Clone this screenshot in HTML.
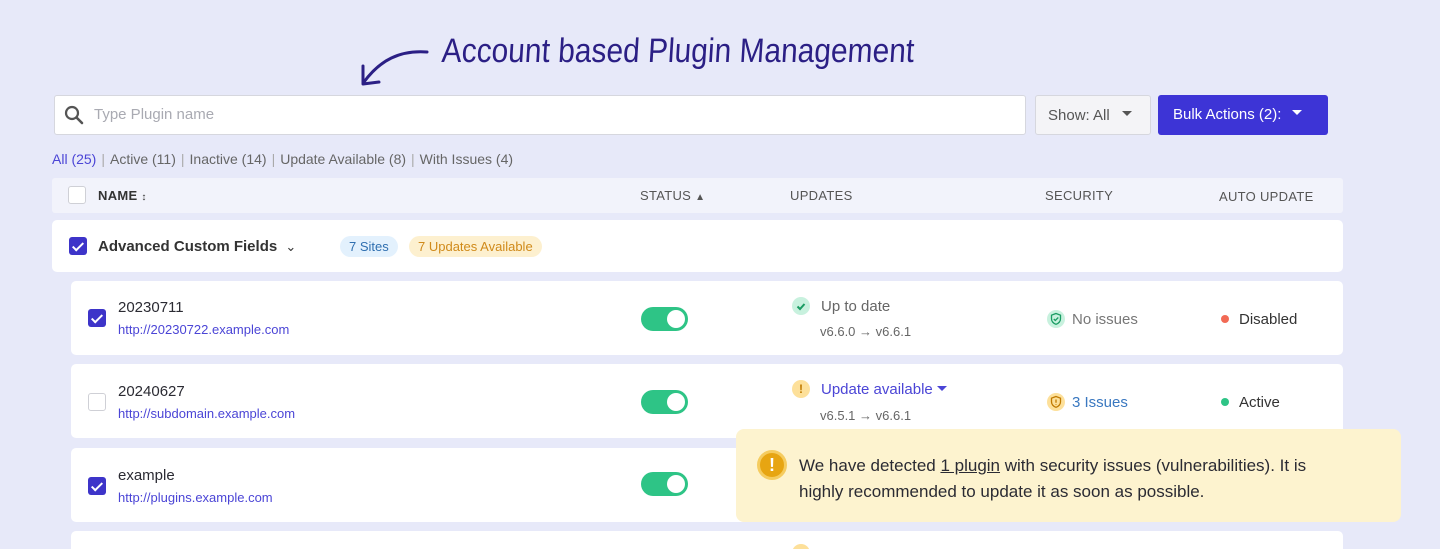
<!DOCTYPE html>
<html><head><style>
*{box-sizing:border-box;margin:0;padding:0}
html,body{width:1440px;height:549px;overflow:hidden}
body{background:#e7e9f9;font-family:"Liberation Sans",sans-serif;position:relative;color:#2b2b33}
.a{position:absolute}
.card{position:absolute;background:#fff;border-radius:5px}
.cb{position:absolute;width:18px;height:18px;border-radius:3px;background:#3d34c9;}
.cb::after{content:"";position:absolute;left:6px;top:2.5px;width:4px;height:9px;border:solid #fff;border-width:0 2px 2px 0;transform:rotate(45deg)}
.cbe{position:absolute;width:18px;height:18px;border-radius:3px;border:1px solid #cfd0d6;background:#fff}
.tg{position:absolute;width:47px;height:24px;border-radius:12px;background:#2ec486}
.tg::after{content:"";position:absolute;right:3px;top:3px;width:18px;height:18px;border-radius:50%;background:#fff}
.nm{font-size:15px;color:#2b2b33}
.url{font-size:13px;color:#4b45d6}
.sm{font-size:13px;color:#666}
.sep{color:#aaa;margin:0 5px}
</style></head><body>
<svg class="a" style="left:355px;top:42px" width="90" height="48" viewBox="0 0 90 48"><path d="M72 10 C45 8 25 18 9 40" fill="none" stroke="#2b1f85" stroke-width="3" stroke-linecap="round"/><path d="M8 24 L8 42 L24 40" fill="none" stroke="#2b1f85" stroke-width="3" stroke-linecap="round" stroke-linejoin="round"/></svg>
<div class="a" style="left:443px;top:32px;font-family:'Liberation Sans',cursive;font-size:34px;color:#2b1f85;transform-origin:0 0;transform:scaleX(0.88) skewX(-4deg);white-space:nowrap">Account based Plugin Management</div>

<div class="a" style="left:54px;top:95px;width:972px;height:40px;background:#fff;border:1px solid #d6d7de;border-radius:3px"></div>
<svg class="a" style="left:64px;top:105px" width="20" height="20" viewBox="0 0 20 20"><circle cx="8" cy="8" r="6" fill="none" stroke="#555" stroke-width="2.2"/><path d="M12.5 12.5 L18 18" stroke="#555" stroke-width="2.6" stroke-linecap="round"/></svg>
<div class="a" style="left:94px;top:106px;font-size:15px;color:#a9aab2">Type Plugin name</div>
<div class="a" style="left:1035px;top:95px;width:116px;height:40px;background:#f4f4f7;border:1px solid #d6d7de;border-radius:3px;font-size:15px;color:#555;padding:11px 0 0 12px">Show: All <span style="display:inline-block;margin-left:8px;border:5px solid transparent;border-top:5px solid #555;vertical-align:-1px"></span></div>
<div class="a" style="left:1158px;top:95px;width:170px;height:40px;background:#3d34d6;border-radius:3px;font-size:15px;color:#fff;padding:11px 0 0 15px">Bulk Actions (2): <span style="display:inline-block;margin-left:6px;border:5px solid transparent;border-top:5px solid #fff;vertical-align:-1px"></span></div>

<div class="a" style="left:52px;top:151px;font-size:14px;color:#666;white-space:nowrap"><span style="color:#4b45d6">All (25)</span><span class="sep">|</span>Active (11)<span class="sep">|</span>Inactive (14)<span class="sep">|</span>Update Available (8)<span class="sep">|</span>With Issues (4)</div>

<div class="a" style="left:52px;top:178px;width:1291px;height:35px;background:#f2f3fb;border-radius:3px"></div>
<div class="cbe" style="left:68px;top:186px"></div>
<div class="a" style="left:98px;top:188px;font-size:13px;font-weight:bold;color:#333;letter-spacing:.3px">NAME <span style="font-size:10px">&#8597;</span></div>
<div class="a" style="left:640px;top:188px;font-size:13px;color:#555;letter-spacing:.3px">STATUS <span style="font-size:10px">&#9650;</span></div>
<div class="a" style="left:790px;top:188px;font-size:13px;color:#555;letter-spacing:.3px">UPDATES</div>
<div class="a" style="left:1045px;top:188px;font-size:13px;color:#555;letter-spacing:.3px">SECURITY</div>
<div class="a" style="left:1219px;top:189px;font-size:13px;color:#555;letter-spacing:.3px">AUTO UPDATE</div>

<div class="card" style="left:52px;top:220px;width:1291px;height:52px"></div>
<div class="cb" style="left:69px;top:237px"></div>
<div class="a" style="left:98px;top:238px;font-size:15px;font-weight:bold;color:#333">Advanced Custom Fields <span style="font-weight:normal;font-size:13px;margin-left:4px">&#8964;</span></div>
<div class="a" style="left:340px;top:236px;height:21px;padding:3px 9px;border-radius:11px;background:#e3f1fd;color:#2f6fb0;font-size:13px">7 Sites</div>
<div class="a" style="left:409px;top:236px;height:21px;padding:3px 9px;border-radius:11px;background:#fdf0cf;color:#d08a1a;font-size:13px">7 Updates Available</div>

<div class="card" style="left:71px;top:281px;width:1272px;height:74px"></div>
<div class="cb" style="left:88px;top:309px"></div>
<div class="a nm" style="left:118px;top:299px">20230711</div>
<div class="a url" style="left:118px;top:322px">http://20230722.example.com</div>
<div class="tg" style="left:641px;top:307px"></div>
<div class="a" style="left:792px;top:297px;width:18px;height:18px;border-radius:50%;background:#c8f1de"><svg width="18" height="18"><path d="M5.5 9.5l2.5 2.5 4.5-5" fill="none" stroke="#1a9c63" stroke-width="2"/></svg></div>
<div class="a" style="left:821px;top:298px;font-size:15px;color:#666">Up to date</div>
<div class="a sm" style="left:820px;top:324px">v6.6.0 → v6.6.1</div>
<div class="a" style="left:1047px;top:310px;width:18px;height:18px;border-radius:50%;background:#c8f1de"><svg width="18" height="18"><path d="M9 3.5l4.5 1.7v3.5c0 3-2 4.6-4.5 5.6-2.5-1-4.5-2.6-4.5-5.6V5.2z" fill="none" stroke="#1a9c63" stroke-width="1.3"/><path d="M6.8 9l1.5 1.5 3-3" fill="none" stroke="#1a9c63" stroke-width="1.3"/></svg></div>
<div class="a" style="left:1072px;top:311px;font-size:15px;color:#777">No issues</div>
<div class="a" style="left:1221px;top:315px;width:8px;height:8px;border-radius:50%;background:#f26a55"></div>
<div class="a" style="left:1239px;top:311px;font-size:15px;color:#333">Disabled</div>

<div class="card" style="left:71px;top:364px;width:1272px;height:74px"></div>
<div class="cbe" style="left:88px;top:393px"></div>
<div class="a nm" style="left:118px;top:383px">20240627</div>
<div class="a url" style="left:118px;top:406px">http://subdomain.example.com</div>
<div class="tg" style="left:641px;top:390px"></div>
<div class="a" style="left:792px;top:380px;width:18px;height:18px;border-radius:50%;background:#fde09a;color:#c07a00;font-size:12px;font-weight:bold;text-align:center;line-height:18px">!</div>
<div class="a" style="left:821px;top:381px;font-size:15px;color:#4b45d6">Update available <span style="display:inline-block;border:5px solid transparent;border-top:5px solid #4b45d6;vertical-align:-2px"></span></div>
<div class="a sm" style="left:820px;top:408px">v6.5.1 → v6.6.1</div>
<div class="a" style="left:1047px;top:393px;width:18px;height:18px;border-radius:50%;background:#fde09a"><svg width="18" height="18"><path d="M9 3.5l4.5 1.7v3.5c0 3-2 4.6-4.5 5.6-2.5-1-4.5-2.6-4.5-5.6V5.2z" fill="none" stroke="#c07a00" stroke-width="1.3"/><path d="M9 6.5v3.2M9 11v.6" stroke="#c07a00" stroke-width="1.3"/></svg></div>
<div class="a" style="left:1072px;top:394px;font-size:15px;color:#3a78c0">3 Issues</div>
<div class="a" style="left:1221px;top:398px;width:8px;height:8px;border-radius:50%;background:#2ec486"></div>
<div class="a" style="left:1239px;top:394px;font-size:15px;color:#333">Active</div>

<div class="card" style="left:71px;top:448px;width:1272px;height:74px"></div>
<div class="cb" style="left:88px;top:477px"></div>
<div class="a nm" style="left:118px;top:467px">example</div>
<div class="a url" style="left:118px;top:490px">http://plugins.example.com</div>
<div class="tg" style="left:641px;top:472px"></div>

<div class="card" style="left:71px;top:531px;width:1272px;height:40px"></div>
<div class="a" style="left:792px;top:544px;width:18px;height:18px;border-radius:50%;background:#fde09a"></div>

<div class="a" style="left:736px;top:429px;width:665px;height:93px;background:#fdf3cf;border-radius:8px"></div>
<div class="a" style="left:757px;top:450px;width:30px;height:30px;border-radius:50%;background:#e7a512;border:3px solid #f5cc60;color:#fff;font-weight:bold;font-size:18px;text-align:center;line-height:24px">!</div>
<div class="a" style="left:799px;top:453px;width:540px;font-size:17px;line-height:26px;color:#2b2b33">We have detected <span style="text-decoration:underline">1 plugin</span> with security issues (vulnerabilities). It is highly recommended to update it as soon as possible.</div>
</body></html>
